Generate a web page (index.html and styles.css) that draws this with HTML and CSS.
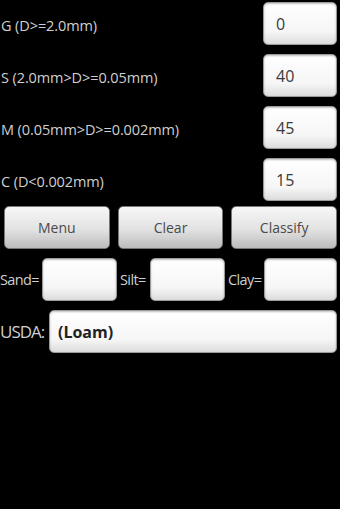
FILE: index.html
```html
<!DOCTYPE html>
<html lang="en">
<head>
    <meta charset="UTF-8">
    <meta name="viewport" content="width=device-width, initial-scale=1.0">
    <title>Soil Texture</title>
    <link rel="stylesheet" href="styles.css">
</head>
<body>

<div class="container">
    <div class="row">
        <label class="fraction-label" for="g">G (D&gt;=2.0mm)</label>
        <input class="field value-field" type="text" id="g" value="0">
    </div>
    <div class="row">
        <label class="fraction-label" for="s">S (2.0mm&gt;D&gt;=0.05mm)</label>
        <input class="field value-field" type="text" id="s" value="40">
    </div>
    <div class="row">
        <label class="fraction-label" for="m">M (0.05mm&gt;D&gt;=0.002mm)</label>
        <input class="field value-field" type="text" id="m" value="45">
    </div>
    <div class="row">
        <label class="fraction-label" for="c">C (D&lt;0.002mm)</label>
        <input class="field value-field" type="text" id="c" value="15">
    </div>

    <div class="row button-row">
        <button class="btn">Menu</button>
        <button class="btn">Clear</button>
        <button class="btn">Classify</button>
    </div>

    <div class="row result-row">
        <label class="small-label sand-label" for="sand">Sand=</label>
        <input class="field result-field" type="text" id="sand">
        <label class="small-label silt-label" for="silt">Silt=</label>
        <input class="field result-field" type="text" id="silt">
        <label class="small-label clay-label" for="clay">Clay=</label>
        <input class="field result-field" type="text" id="clay">
    </div>

    <div class="row usda-row">
        <label class="small-label usda-label" for="usda">USDA:</label>
        <input class="field usda-field" type="text" id="usda" value="(Loam)">
    </div>
</div>

</body>
</html>
```

FILE: styles.css
```css
body {
    margin: 0;
    padding: 0;
    background-color: #000;
    font-family: "Open Sans", "Noto Sans", sans-serif;
    width: 340px;
    height: 509px;
    overflow: hidden;
}
.container {
    display: flex;
    flex-direction: column;
    gap: 9px;
    padding: 2px 3px 0 0;
}
.row {
    display: flex;
    align-items: center;
    height: 43px;
}
.fraction-label {
    flex: 1;
    padding: 3px 0 0 1px;
    color: #cfcfcf;
    font-size: 14.5px;
    letter-spacing: -0.1px;
}
.field {
    box-sizing: border-box;
    height: 43px;
    border: 1px solid #9a9a9a;
    border-radius: 5px;
    background: linear-gradient(#ffffff, #f6f6f6 70%, #dcdcdc);
    box-shadow: inset 0 1px 2px rgba(0, 0, 0, 0.25);
    font-family: "Open Sans", "Noto Sans", sans-serif;
    color: #3a3a3a;
    outline: none;
}
.value-field {
    width: 74px;
    padding: 0 12px;
    font-size: 16px;
}
.button-row {
    margin-top: -4px;
    gap: 8px;
    padding-left: 4px;
}
.btn {
    flex: 1;
    height: 43px;
    border: 1px solid #777;
    border-radius: 5px;
    background: linear-gradient(#f7f7f7, #e2e2e2 55%, #bcbcbc);
    color: #4a4a4a;
    font-family: "Open Sans", "Noto Sans", sans-serif;
    font-size: 14px;
}
.small-label {
    color: #cfcfcf;
    font-size: 14.5px;
    letter-spacing: -0.6px;
}
.sand-label {
    width: 42px;
}
.silt-label {
    width: 30px;
    margin-left: 3px;
}
.clay-label {
    width: 36px;
    margin-left: 3px;
}
.result-field {
    width: 75px;
}
.result-row .result-field:last-child {
    width: 73px;
}
.usda-label {
    width: 49px;
    font-size: 17px;
    letter-spacing: -1px;
}
.usda-field {
    flex: 1;
    padding: 0 8px;
    font-size: 16px;
    font-weight: bold;
    color: #222;
}
```
